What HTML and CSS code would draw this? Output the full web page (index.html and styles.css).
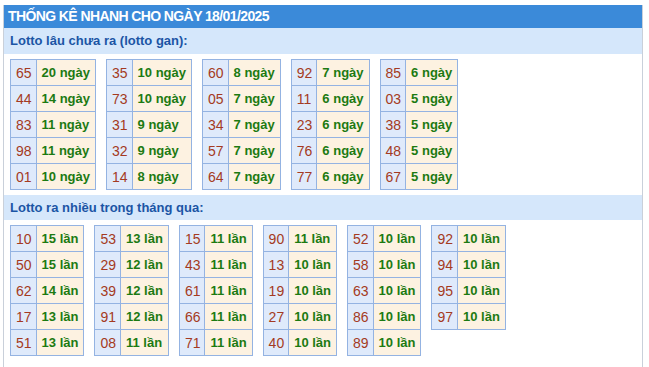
FILE: index.html
```html
<!DOCTYPE html>
<html lang="vi">
<head>
<meta charset="utf-8">
<title>Thống kê nhanh</title>
<link rel="stylesheet" href="styles.css">
</head>
<body>
<div class="box">
  <div class="title">THỐNG KÊ NHANH CHO NGÀY 18/01/2025</div>
  <div class="sub">Lotto lâu chưa ra (lotto gan):</div>
  <div class="tables">
    <table class="lt"><tr><td class="n">65</td><td class="v">20 ngày</td></tr><tr><td class="n">44</td><td class="v">14 ngày</td></tr><tr><td class="n">83</td><td class="v">11 ngày</td></tr><tr><td class="n">98</td><td class="v">11 ngày</td></tr><tr><td class="n">01</td><td class="v">10 ngày</td></tr></table>
    <table class="lt"><tr><td class="n">35</td><td class="v">10 ngày</td></tr><tr><td class="n">73</td><td class="v">10 ngày</td></tr><tr><td class="n">31</td><td class="v">9 ngày</td></tr><tr><td class="n">32</td><td class="v">9 ngày</td></tr><tr><td class="n">14</td><td class="v">8 ngày</td></tr></table>
    <table class="lt"><tr><td class="n">60</td><td class="v">8 ngày</td></tr><tr><td class="n">05</td><td class="v">7 ngày</td></tr><tr><td class="n">34</td><td class="v">7 ngày</td></tr><tr><td class="n">57</td><td class="v">7 ngày</td></tr><tr><td class="n">64</td><td class="v">7 ngày</td></tr></table>
    <table class="lt"><tr><td class="n">92</td><td class="v">7 ngày</td></tr><tr><td class="n">11</td><td class="v">6 ngày</td></tr><tr><td class="n">23</td><td class="v">6 ngày</td></tr><tr><td class="n">76</td><td class="v">6 ngày</td></tr><tr><td class="n">77</td><td class="v">6 ngày</td></tr></table>
    <table class="lt"><tr><td class="n">85</td><td class="v">6 ngày</td></tr><tr><td class="n">03</td><td class="v">5 ngày</td></tr><tr><td class="n">38</td><td class="v">5 ngày</td></tr><tr><td class="n">48</td><td class="v">5 ngày</td></tr><tr><td class="n">67</td><td class="v">5 ngày</td></tr></table>
  </div>
  <div class="sub sub2">Lotto ra nhiều trong tháng qua:</div>
  <div class="tables tables2">
    <table class="lt"><tr><td class="n">10</td><td class="v">15 lần</td></tr><tr><td class="n">50</td><td class="v">15 lần</td></tr><tr><td class="n">62</td><td class="v">14 lần</td></tr><tr><td class="n">17</td><td class="v">13 lần</td></tr><tr><td class="n">51</td><td class="v">13 lần</td></tr></table>
    <table class="lt"><tr><td class="n">53</td><td class="v">13 lần</td></tr><tr><td class="n">29</td><td class="v">12 lần</td></tr><tr><td class="n">39</td><td class="v">12 lần</td></tr><tr><td class="n">91</td><td class="v">12 lần</td></tr><tr><td class="n">08</td><td class="v">11 lần</td></tr></table>
    <table class="lt"><tr><td class="n">15</td><td class="v">11 lần</td></tr><tr><td class="n">43</td><td class="v">11 lần</td></tr><tr><td class="n">61</td><td class="v">11 lần</td></tr><tr><td class="n">66</td><td class="v">11 lần</td></tr><tr><td class="n">71</td><td class="v">11 lần</td></tr></table>
    <table class="lt"><tr><td class="n">90</td><td class="v">11 lần</td></tr><tr><td class="n">13</td><td class="v">10 lần</td></tr><tr><td class="n">19</td><td class="v">10 lần</td></tr><tr><td class="n">27</td><td class="v">10 lần</td></tr><tr><td class="n">40</td><td class="v">10 lần</td></tr></table>
    <table class="lt"><tr><td class="n">52</td><td class="v">10 lần</td></tr><tr><td class="n">58</td><td class="v">10 lần</td></tr><tr><td class="n">63</td><td class="v">10 lần</td></tr><tr><td class="n">86</td><td class="v">10 lần</td></tr><tr><td class="n">89</td><td class="v">10 lần</td></tr></table>
    <table class="lt"><tr><td class="n">92</td><td class="v">10 lần</td></tr><tr><td class="n">94</td><td class="v">10 lần</td></tr><tr><td class="n">95</td><td class="v">10 lần</td></tr><tr><td class="n">97</td><td class="v">10 lần</td></tr></table>
  </div>
</div>
</body>
</html>
```

FILE: styles.css
```css
html, body {
  margin: 0;
  padding: 0;
  background: #ffffff;
}
body {
  font-family: "Liberation Sans", Arial, sans-serif;
  font-size: 13px;
}
.box {
  margin: 5px 0 0 3px;
  width: 638px;
  height: 362px;
  border-left: 1px solid #c9d0da;
  border-right: 1px solid #c9d0da;
}
.title {
  background: #3b8ad9;
  color: #ffffff;
  font-weight: bold;
  font-size: 14px;
  height: 23px;
  line-height: 23px;
  padding-left: 4px;
  letter-spacing: -0.6px;
}
.sub {
  background: #d5e7fb;
  color: #1b55a5;
  font-weight: bold;
  font-size: 13px;
  height: 26px;
  line-height: 26px;
  padding-left: 6px;
}
.sub2 {
  height: 25px;
  line-height: 25px;
}
.tables {
  display: flex;
  align-items: flex-start;
  gap: 10px;
  padding: 5px 0 5px 6px;
}
.tables2 {
  gap: 10px;
}
.lt {
  border-collapse: collapse;
}
.lt td {
  border: 1px solid #94b3e2;
  height: 25px;
  padding: 0 4px 0 5px;
  font-size: 14px;
  white-space: nowrap;
}
.lt .n {
  background: #dfeafb;
  color: #a43a22;
}
.lt .v {
  background: #fdf2e1;
  color: #1c7a12;
  font-weight: bold;
  font-size: 13px;
  padding: 0 5px;
}
```
